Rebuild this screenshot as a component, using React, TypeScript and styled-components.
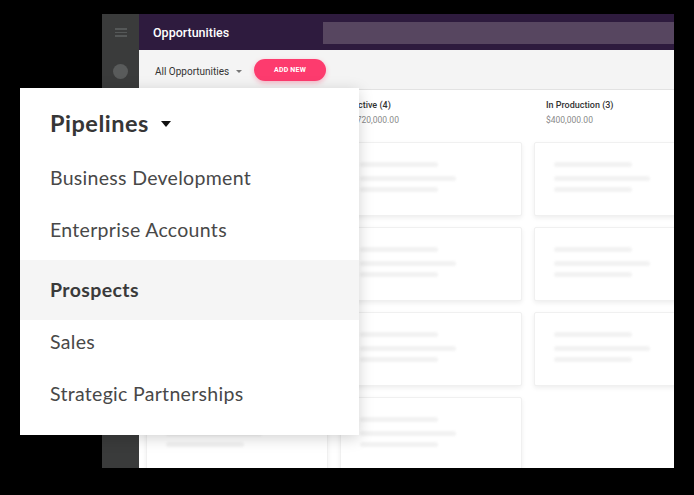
import React from "react";
import styled, { createGlobalStyle } from "styled-components";

const GlobalStyle = createGlobalStyle`
  html, body {
    margin: 0;
    padding: 0;
    background: #000;
  }
  * {
    box-sizing: border-box;
  }
`;

const Stage = styled.div`
  position: relative;
  width: 694px;
  height: 495px;
  background: #000;
  padding: 14px 0 0 102px;
  overflow: hidden;
`;

const AppWindow = styled.div`
  display: grid;
  grid-template-columns: 37px 1fr;
  width: 572px;
  height: 454px;
  background: #fff;
  overflow: hidden;
  font-family: Roboto, "Liberation Sans", sans-serif;
`;

const Sidebar = styled.div`
  background: #3a3b3b;
  display: flex;
  flex-direction: column;
  align-items: center;
  padding-top: 14px;
  gap: 27px;
`;

const Hamburger = styled.div`
  width: 12px;
  display: flex;
  flex-direction: column;
  gap: 2px;
  span {
    display: block;
    height: 1.5px;
    background: #555858;
  }
`;

const Avatar = styled.div`
  width: 15px;
  height: 15px;
  border-radius: 50%;
  background: #595b5b;
`;

const Main = styled.div`
  display: flex;
  flex-direction: column;
  min-width: 0;
`;

const Header = styled.div`
  height: 36px;
  background: #2e1b3e;
  display: flex;
  align-items: center;
  padding-left: 14px;
`;

const Title = styled.div`
  color: #fff;
  font-size: 12.5px;
  font-weight: 500;
  width: 170px;
`;

const SearchBar = styled.div`
  flex: 1;
  height: 22px;
  background: #574660;
  margin-top: 1px;
`;

const Toolbar = styled.div`
  height: 40px;
  background: #f4f4f4;
  border-bottom: 1px solid #e2e2e2;
  display: flex;
  align-items: center;
  padding-left: 16px;
`;

const FilterSelect = styled.div`
  display: flex;
  align-items: center;
  gap: 7px;
  font-size: 10px;
  color: #333;
  width: 99px;
  margin-top: 3px;
`;

const SmallCaret = styled.span`
  width: 0;
  height: 0;
  border-left: 3px solid transparent;
  border-right: 3px solid transparent;
  border-top: 3px solid #777;
`;

const AddButton = styled.div`
  width: 72px;
  height: 22px;
  border-radius: 11px;
  background: #fd3b6e;
  color: #fff;
  font-size: 7px;
  font-weight: 700;
  letter-spacing: 0.2px;
  display: flex;
  align-items: center;
  justify-content: center;
  box-shadow: 0 2px 5px rgba(253, 59, 110, 0.35);
`;

const Board = styled.div`
  flex: 1;
  display: flex;
  gap: 12px;
  padding: 9px 0 0 7px;
  overflow: hidden;
`;

const Column = styled.div`
  flex: 0 0 182px;
  display: flex;
  flex-direction: column;
`;

const ColumnHead = styled.div`
  padding-left: 12px;
  height: 43px;
`;

const ColumnName = styled.div`
  font-size: 9px;
  font-weight: 500;
  color: #333;
  line-height: 12px;
`;

const ColumnAmount = styled.div`
  font-size: 8.5px;
  color: #8a8a8a;
  line-height: 12px;
  margin-top: 3px;
`;

const CardList = styled.div`
  display: flex;
  flex-direction: column;
  gap: 11px;
`;

const Card = styled.div`
  height: 74px;
  background: #fff;
  border: 1px solid #f0f0f0;
  border-radius: 2px;
  box-shadow: 0 2px 5px rgba(0, 0, 0, 0.07);
  padding: 19px 0 0 19px;
  display: flex;
  flex-direction: column;
  gap: 9px;
`;

const Skeleton = styled.div<{ w: number }>`
  width: ${(p) => p.w}px;
  height: 5px;
  border-radius: 3px;
  background: #f2f2f2;
  filter: blur(1px);
  &:nth-child(3) {
    margin-top: -3px;
  }
`;

const Panel = styled.div`
  position: absolute;
  left: 20px;
  top: 88px;
  width: 339px;
  height: 347px;
  background: #fff;
  box-shadow: 0 3px 14px rgba(0, 0, 0, 0.18);
  font-family: Lato, "Open Sans", sans-serif;
  color: #3c3c3c;
`;

const PanelTitle = styled.div`
  height: 64px;
  display: flex;
  align-items: center;
  gap: 12px;
  padding: 6px 0 0 30px;
  font-size: 23.5px;
  font-weight: 700;
  letter-spacing: 0.5px;
  color: #363636;
`;

const BigCaret = styled.span`
  width: 0;
  height: 0;
  border-left: 5.5px solid transparent;
  border-right: 5.5px solid transparent;
  border-top: 6px solid #111;
  margin-top: 2px;
`;

const PipelineItem = styled.div<{ selected?: boolean }>`
  height: ${(p) => (p.selected ? 60 : 52)}px;
  margin: ${(p) => (p.selected ? "4px 0 -4px" : "0")};
  display: flex;
  align-items: center;
  padding: 0 0 2px 30px;
  font-size: 19.5px;
  letter-spacing: ${(p) => (p.selected ? 0.4 : 0.3)}px;
  font-weight: ${(p) => (p.selected ? 700 : 400)};
  background: ${(p) => (p.selected ? "#f5f5f5" : "transparent")};
  color: ${(p) => (p.selected ? "#3a3a3a" : "#484848")};
`;

const columns = [
  { name: "Qualified (4)", amount: "$380,000.00", cards: 4 },
  { name: "Active (4)", amount: "$720,000.00", cards: 4 },
  { name: "In Production (3)", amount: "$400,000.00", cards: 3 },
];

const pipelines = [
  "Business Development",
  "Enterprise Accounts",
  "Prospects",
  "Sales",
  "Strategic Partnerships",
];

export default function App() {
  return (
    <>
      <GlobalStyle />
      <Stage>
        <AppWindow>
          <Sidebar>
            <Hamburger>
              <span />
              <span />
              <span />
            </Hamburger>
            <Avatar />
          </Sidebar>
          <Main>
            <Header>
              <Title>Opportunities</Title>
              <SearchBar />
            </Header>
            <Toolbar>
              <FilterSelect>
                All Opportunities <SmallCaret />
              </FilterSelect>
              <AddButton>ADD NEW</AddButton>
            </Toolbar>
            <Board>
              {columns.map((col) => (
                <Column key={col.name}>
                  <ColumnHead>
                    <ColumnName>{col.name}</ColumnName>
                    <ColumnAmount>{col.amount}</ColumnAmount>
                  </ColumnHead>
                  <CardList>
                    {Array.from({ length: col.cards }).map((_, i) => (
                      <Card key={i}>
                        <Skeleton w={78} />
                        <Skeleton w={96} />
                        <Skeleton w={78} />
                      </Card>
                    ))}
                  </CardList>
                </Column>
              ))}
            </Board>
          </Main>
        </AppWindow>
        <Panel>
          <PanelTitle>
            Pipelines <BigCaret />
          </PanelTitle>
          {pipelines.map((p) => (
            <PipelineItem key={p} selected={p === "Prospects"}>
              {p}
            </PipelineItem>
          ))}
        </Panel>
      </Stage>
    </>
  );
}
